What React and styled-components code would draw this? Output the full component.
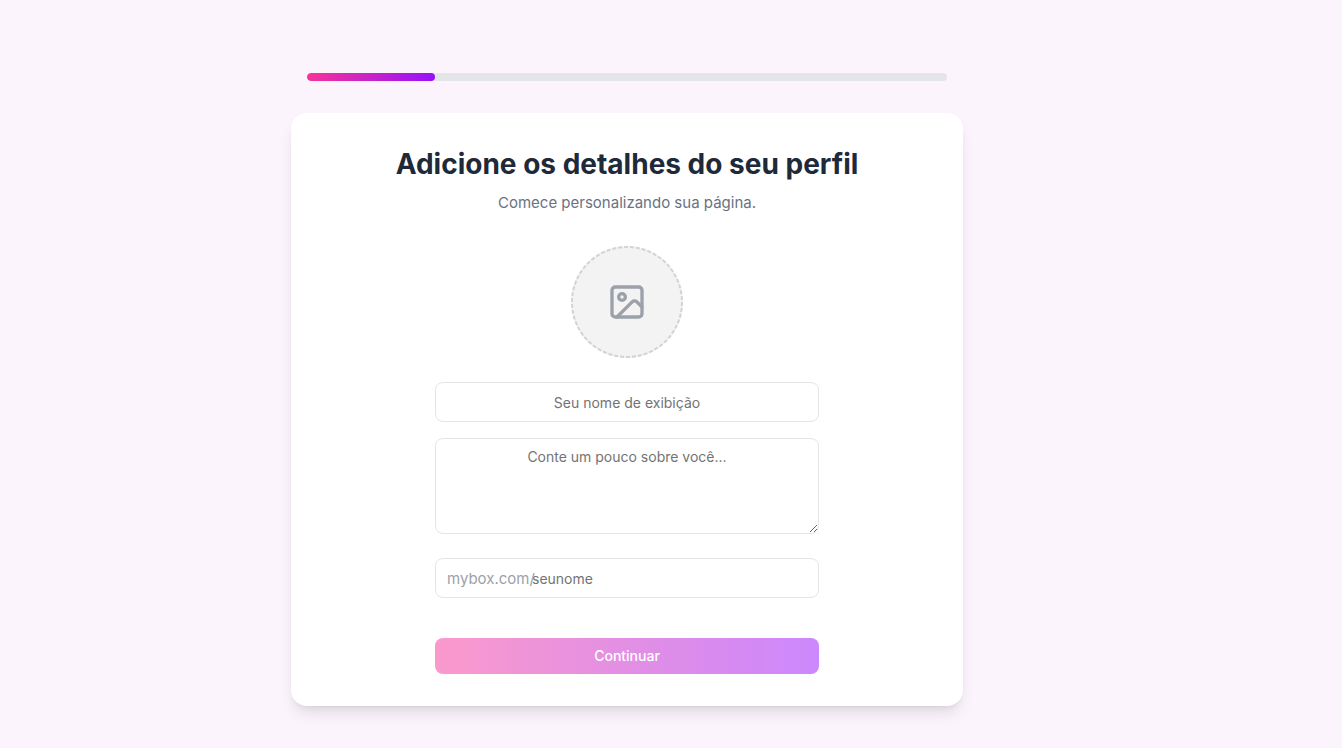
import React, { useState } from "react";
import styled, { createGlobalStyle } from "styled-components";
import { Image } from "lucide-react";

const GlobalStyle = createGlobalStyle`
  *, *::before, *::after {
    box-sizing: border-box;
  }

  body {
    margin: 0;
    background: #fbf4fd;
    font-family: Inter, "Liberation Sans", sans-serif;
    font-size: 15px;
    line-height: 24px;
    -webkit-font-smoothing: antialiased;
  }

  input, textarea, button {
    font-family: inherit;
  }
`;

const Page = styled.main`
  display: flex;
  flex-direction: column;
  align-items: center;
  gap: 32px;
  min-height: 100vh;
  padding: 73px 104px 40px 16px;
  background: #fbf4fd;
`;

const ProgressTrack = styled.div`
  width: 100%;
  max-width: 640px;
  height: 8px;
  border-radius: 4px;
  background: #e3e5e9;
  overflow: hidden;
`;

const ProgressBar = styled.div`
  height: 100%;
  border-radius: 4px;
  background: linear-gradient(to right, #f6339a, #9810fa);
`;

const Card = styled.section`
  display: flex;
  flex-direction: column;
  align-items: center;
  width: 100%;
  max-width: 672px;
  padding: 32px;
  border-radius: 16px;
  background: #fff;
  box-shadow: 0 10px 15px -3px rgba(0, 0, 0, 0.1), 0 4px 6px -4px rgba(0, 0, 0, 0.1);
`;

const Title = styled.h1`
  margin: 0 0 8px;
  font-size: 28px;
  line-height: 38px;
  font-weight: 700;
  text-align: center;
  color: #1e2939;
`;

const Subtitle = styled.p`
  margin: 0 0 31px;
  text-align: center;
  color: #6a7282;
`;

const Form = styled.form`
  display: flex;
  flex-direction: column;
  width: 100%;
  max-width: 384px;
`;

const AvatarButton = styled.button`
  position: relative;
  display: flex;
  align-items: center;
  justify-content: center;
  align-self: center;
  width: 112px;
  height: 112px;
  margin-bottom: 24px;
  padding: 0;
  border: none;
  border-radius: 50%;
  background: #f3f3f4;
  color: #9ca1a9;
  cursor: pointer;
`;

const DashedRing = styled.svg`
  position: absolute;
  inset: 0;
  width: 100%;
  height: 100%;
  fill: none;
  stroke: #d1d3d8;
  stroke-width: 2;
  stroke-dasharray: 4 2;
`;

const Input = styled.input`
  width: 100%;
  height: 40px;
  padding: 8px 12px;
  padding-left: ${(props) => (props.$prefixed ? "96px" : "12px")};
  border: 1px solid #e5e5e5;
  border-radius: 8px;
  background: transparent;
  font-size: 14px;
  line-height: 20px;
  text-align: ${(props) => (props.$prefixed ? "left" : "center")};
  color: #1e2939;

  &::placeholder {
    color: #737373;
  }
`;

const TextArea = styled.textarea`
  display: block;
  width: 100%;
  height: 96px;
  margin: 16px 0 24px;
  padding: 8px 12px;
  border: 1px solid #e5e5e5;
  border-radius: 8px;
  background: transparent;
  font-size: 14px;
  line-height: 20px;
  text-align: center;
  color: #1e2939;
  resize: vertical;

  &::placeholder {
    color: #737373;
  }
`;

const UsernameField = styled.div`
  position: relative;
  display: flex;
  align-items: center;
  margin-bottom: 40px;
`;

const Prefix = styled.label`
  position: absolute;
  left: 12px;
  padding-top: 2px;
  color: #9ca1a9;
`;

const SubmitButton = styled.button`
  height: 36px;
  padding: 8px 16px;
  border: none;
  border-radius: 8px;
  background: linear-gradient(to right, #f6339a, #9810fa);
  font-size: 14px;
  line-height: 20px;
  font-weight: 500;
  color: #fff;
  cursor: pointer;

  &:disabled {
    opacity: 0.5;
    cursor: default;
  }
`;

const STEP = 1;
const TOTAL_STEPS = 5;

const App = () => {
  const [name, setName] = useState("");
  const [bio, setBio] = useState("");
  const [username, setUsername] = useState("");

  const handleSubmit = (e) => {
    e.preventDefault();
  };

  return (
    <>
      <GlobalStyle />
      <Page>
        <ProgressTrack>
          <ProgressBar style={{ width: `${(STEP / TOTAL_STEPS) * 100}%` }} />
        </ProgressTrack>

        <Card>
          <Title>Adicione os detalhes do seu perfil</Title>
          <Subtitle>Comece personalizando sua página.</Subtitle>

          <Form onSubmit={handleSubmit}>
            {/* Profile picture */}
            <AvatarButton type="button" aria-label="Adicionar foto">
              <DashedRing viewBox="0 0 112 112" aria-hidden="true">
                <circle cx="56" cy="56" r="55" pathLength="348" />
              </DashedRing>
              <Image size={40} />
            </AvatarButton>

            <Input
              type="text"
              aria-label="Seu nome de exibição"
              placeholder="Seu nome de exibição"
              value={name}
              onChange={(e) => setName(e.target.value)}
            />
            <TextArea
              aria-label="Conte um pouco sobre você"
              placeholder="Conte um pouco sobre você..."
              value={bio}
              onChange={(e) => setBio(e.target.value)}
            />

            {/* Public address */}
            <UsernameField>
              <Prefix htmlFor="username">mybox.com/</Prefix>
              <Input
                $prefixed
                id="username"
                type="text"
                placeholder="seunome"
                value={username}
                onChange={(e) => setUsername(e.target.value)}
              />
            </UsernameField>

            <SubmitButton type="submit" disabled={!name || !username}>
              Continuar
            </SubmitButton>
          </Form>
        </Card>
      </Page>
    </>
  );
};

export default App;
